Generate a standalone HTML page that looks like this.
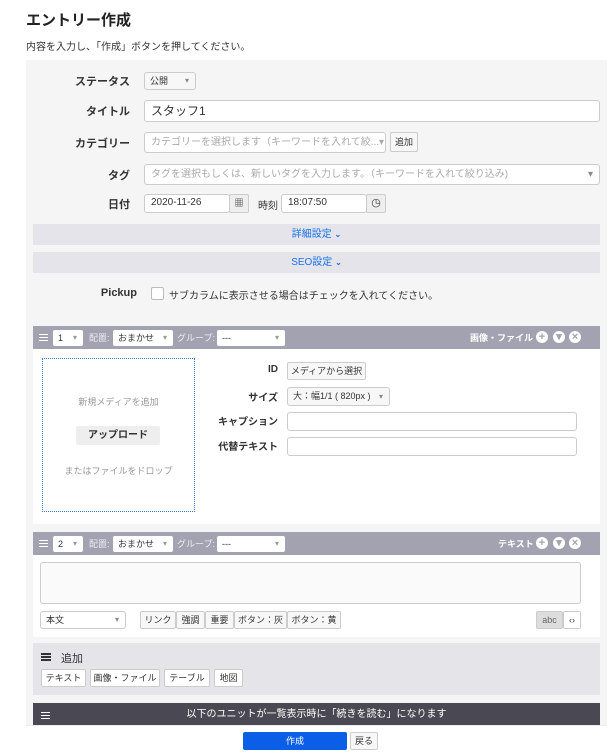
<!DOCTYPE html>
<html><head><meta charset="utf-8"><style>
*{box-sizing:border-box;margin:0;padding:0}
body{width:614px;height:756px;overflow:hidden;background:#fff;font-family:"Liberation Sans","Noto Sans CJK JP",sans-serif;color:#333;position:relative;font-size:10px}
.a{position:absolute}
.lbl{position:absolute;font-weight:bold;font-size:11px;color:#333;text-align:right}
.inp{position:absolute;background:#fff;border:1px solid #ccc;border-radius:3px;font-size:10px;line-height:16px;padding-left:6px;color:#333}
.sel{position:absolute;background:#f7f7f7;border:1px solid #ccc;border-radius:3px;font-size:9px;padding-left:5px;color:#333}
.sel:after{content:"▾";position:absolute;right:6px;top:0;color:#888;font-size:8px}
.btn{position:absolute;background:#f7f7f7;border:1px solid #ccc;border-radius:2px;font-size:9px;text-align:center;color:#333}
.bar{position:absolute;left:33px;width:567px;background:#e4e4ea;color:#1a73e8;text-align:center;font-size:10px}
.uh{position:absolute;left:33px;width:567px;height:23px;background:#a3a2b1}
.ham{position:absolute;width:9px;height:7px;border-top:1.5px solid #fff;border-bottom:1.5px solid #fff}
.ham:after{content:"";position:absolute;left:0;right:0;top:1.5px;border-top:1.5px solid #fff}
.hamd{position:absolute;width:10px;height:8px;border-top:2px solid #333;border-bottom:2px solid #333}
.hamd:after{content:"";position:absolute;left:0;right:0;top:1px;border-top:2px solid #333}
.ic{position:absolute;width:12px;height:12px;border-radius:50%;background:#fff;color:#a3a2b1;font-size:11px;line-height:12px;text-align:center;font-weight:bold;top:5px}
.hs{position:absolute;top:4px;height:16px;background:#fff;border-radius:2px;font-size:9px;line-height:16px;padding-left:5px;color:#333}
.hs:after{content:"▾";position:absolute;right:6px;color:#999;font-size:8px}
.ht{position:absolute;top:4px;color:#ececf2;font-size:9px;line-height:16px}
</style></head><body>
<div class="a" style="left:26px;top:9px;font-size:15px;font-weight:bold;color:#222">エントリー作成</div>
<div class="a" style="left:26px;top:38px;font-size:10px;color:#333">内容を入力し、「作成」ボタンを押してください。</div>
<div class="a" style="left:26px;top:60px;width:581px;height:696px;background:#f5f5f5"></div>

<div class="lbl" style="left:60px;width:70px;top:73px">ステータス</div>
<div class="sel" style="left:144px;top:72px;width:52px;height:18px;line-height:16px">公開</div>
<div class="lbl" style="left:60px;width:70px;top:103px">タイトル</div>
<div class="inp" style="left:144px;top:100px;width:456px;height:22px;line-height:20px;font-size:12px">スタッフ1</div>
<div class="lbl" style="left:60px;width:70px;top:135px">カテゴリー</div>
<div class="inp" style="left:144px;top:132px;width:242px;height:21px;line-height:19px;color:#aaa">カテゴリーを選択します（キーワードを入れて絞...▾</div>
<div class="btn" style="left:390px;top:132px;width:28px;height:20px;line-height:18px">追加</div>
<div class="lbl" style="left:60px;width:70px;top:167px">タグ</div>
<div class="inp" style="left:144px;top:164px;width:456px;height:21px;line-height:19px;color:#aaa">タグを選択もしくは、新しいタグを入力します。（キーワードを入れて絞り込み)<span style="position:absolute;right:6px;color:#888">▾</span></div>
<div class="lbl" style="left:60px;width:70px;top:196px">日付</div>
<div class="inp" style="left:144px;top:194px;width:86px;height:19px">2020-11-26</div>
<div class="btn" style="left:229px;top:194px;width:20px;height:19px;line-height:17px;background:#eee">▦</div>
<div class="a" style="left:258px;top:197px;font-size:10px">時刻</div>
<div class="inp" style="left:281px;top:194px;width:86px;height:19px">18:07:50</div>
<div class="btn" style="left:366px;top:194px;width:20px;height:19px;line-height:17px;background:#eee;font-size:11px">◷</div>

<div class="bar" style="top:224px;height:21px;line-height:21px">詳細設定 <b style="font-size:8px">⌄</b></div>
<div class="bar" style="top:252px;height:21px;line-height:21px">SEO設定 <b style="font-size:8px">⌄</b></div>
<div class="lbl" style="left:80px;width:57px;top:287px">Pickup</div>
<div class="a" style="left:151px;top:287px;width:13px;height:13px;border:1px solid #bbb;border-radius:2px;background:#fff"></div>
<div class="a" style="left:169px;top:287px;font-size:10px">サブカラムに表示させる場合はチェックを入れてください。</div>

<div class="uh" style="top:326px">
<div class="ham" style="left:6px;top:8px"></div>
<div class="hs" style="left:20px;width:30px">1</div>
<div class="ht" style="left:56px">配置:</div>
<div class="hs" style="left:80px;width:60px">おまかせ</div>
<div class="ht" style="left:144px">グループ:</div>
<div class="hs" style="left:184px;width:68px">---</div>
<div class="ht" style="left:437px;color:#fff;font-weight:bold">画像・ファイル</div>
<div class="ic" style="left:503px">+</div><div class="ic" style="left:520px">▾</div><div class="ic" style="left:536px">×</div>
</div>
<div class="a" style="left:33px;top:349px;width:567px;height:175px;background:#fff"></div>
<div class="a" style="left:42px;top:358px;width:153px;height:154px;border:1px dotted #3a78d8"></div>
<div class="a" style="left:42px;top:395px;width:153px;text-align:center;color:#999;font-size:9px">新規メディアを追加</div>
<div class="a" style="left:76px;top:426px;width:84px;height:19px;background:#eee;border-radius:2px;text-align:center;line-height:19px;font-size:10px;font-weight:bold">アップロード</div>
<div class="a" style="left:42px;top:464px;width:153px;text-align:center;color:#999;font-size:9px">またはファイルをドロップ</div>
<div class="lbl" style="left:220px;width:58px;top:364px;font-size:10px">ID</div>
<div class="btn" style="left:287px;top:362px;width:79px;height:18px;line-height:16px">メディアから選択</div>
<div class="lbl" style="left:220px;width:58px;top:389px;font-size:10px">サイズ</div>
<div class="sel" style="left:287px;top:387px;width:103px;height:19px;line-height:17px">大：幅1/1 ( 820px )</div>
<div class="lbl" style="left:200px;width:78px;top:413px;font-size:10px">キャプション</div>
<div class="inp" style="left:287px;top:412px;width:290px;height:19px"></div>
<div class="lbl" style="left:200px;width:78px;top:438px;font-size:10px">代替テキスト</div>
<div class="inp" style="left:287px;top:437px;width:290px;height:19px"></div>

<div class="uh" style="top:532px">
<div class="ham" style="left:6px;top:8px"></div>
<div class="hs" style="left:20px;width:30px">2</div>
<div class="ht" style="left:56px">配置:</div>
<div class="hs" style="left:80px;width:60px">おまかせ</div>
<div class="ht" style="left:144px">グループ:</div>
<div class="hs" style="left:184px;width:68px">---</div>
<div class="ht" style="left:465px;color:#fff;font-weight:bold">テキスト</div>
<div class="ic" style="left:503px">+</div><div class="ic" style="left:520px">▾</div><div class="ic" style="left:536px">×</div>
</div>
<div class="a" style="left:33px;top:555px;width:567px;height:82px;background:#fff"></div>
<div class="inp" style="left:40px;top:562px;width:541px;height:42px;background:#fafafa"></div>
<div class="sel" style="left:40px;top:611px;width:86px;height:18px;line-height:16px;background:#fff">本文</div>
<div class="btn" style="left:140px;top:611px;width:36px;height:18px;line-height:16px">リンク</div>
<div class="btn" style="left:176px;top:611px;width:29px;height:18px;line-height:16px">強調</div>
<div class="btn" style="left:205px;top:611px;width:29px;height:18px;line-height:16px">重要</div>
<div class="btn" style="left:234px;top:611px;width:53px;height:18px;line-height:16px">ボタン：灰</div>
<div class="btn" style="left:287px;top:611px;width:54px;height:18px;line-height:16px">ボタン：黄</div>
<div class="btn" style="left:536px;top:611px;width:27px;height:18px;line-height:16px;background:#ddd;color:#666">abc</div>
<div class="btn" style="left:563px;top:611px;width:18px;height:18px;line-height:16px;background:#fff">‹›</div>

<div class="a" style="left:33px;top:643px;width:567px;height:52px;background:#e4e4e9"></div>
<div class="hamd" style="left:41px;top:653px"></div>
<div class="a" style="left:61px;top:650px;font-size:11px">追加</div>
<div class="btn" style="left:41px;top:669px;width:45px;height:18px;line-height:16px;background:#fff">テキスト</div>
<div class="btn" style="left:90px;top:669px;width:70px;height:18px;line-height:16px;background:#fff">画像・ファイル</div>
<div class="btn" style="left:164px;top:669px;width:46px;height:18px;line-height:16px;background:#fff">テーブル</div>
<div class="btn" style="left:214px;top:669px;width:29px;height:18px;line-height:16px;background:#fff">地図</div>

<div class="a" style="left:33px;top:703px;width:567px;height:24px;background:#4a4953;color:#fff;text-align:center;line-height:24px;font-size:10px">以下のユニットが一覧表示時に「続きを読む」になります</div>
<div class="ham" style="left:41px;top:712px;width:9px"></div>
<div class="a" style="left:26px;top:725px;width:581px;height:31px;background:#fff;border-top:1px solid #eee"></div>
<div class="a" style="left:243px;top:732px;width:104px;height:18px;background:#0b5fe6;border-radius:2px;color:#fff;text-align:center;line-height:18px;font-size:9px">作成</div>
<div class="btn" style="left:350px;top:732px;width:28px;height:18px;line-height:16px">戻る</div>
</body></html>
